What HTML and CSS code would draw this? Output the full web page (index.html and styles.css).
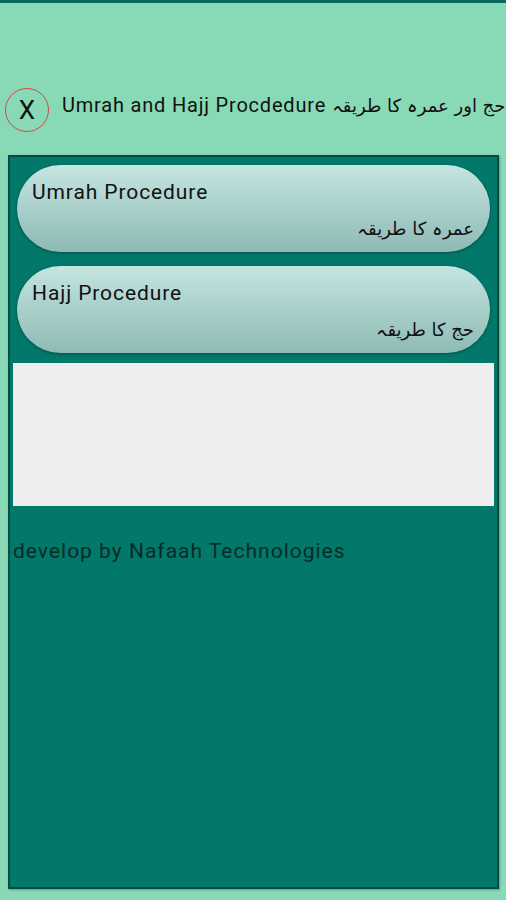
FILE: index.html
```html
<!DOCTYPE html>
<html lang="en">

<head>
    <meta charset="UTF-8">
    <meta name="viewport" content="width=device-width, initial-scale=1.0">
    <title>Umrah and Hajj</title>
    <link rel="stylesheet" href="styles.css">
</head>

<body>
    <div class="topbar"></div>

    <div class="header">
        <div class="close">X</div>
        <div class="title">Umrah and Hajj Procdedure <span class="ur" dir="rtl">حج اور عمرہ کا طریقہ</span></div>
    </div>

    <div class="panel">
        <div class="btn">
            <div class="en">Umrah Procedure</div>
            <div class="ur" dir="rtl">عمرہ کا طریقہ</div>
        </div>
        <div class="btn">
            <div class="en">Hajj Procedure</div>
            <div class="ur" dir="rtl">حج کا طریقہ</div>
        </div>
        <div class="blank"></div>
        <p class="credit">develop by Nafaah Technologies</p>
    </div>
</body>

</html>
```

FILE: styles.css
```css
body {
    margin: 0;
    background: #88d9b5;
    font-family: Roboto, "DejaVu Sans", sans-serif;
    color: #111;
}

.topbar {
    height: 3px;
    background: #0b6a5e;
}

.header {
    display: flex;
    align-items: center;
    gap: 13px;
    padding: 85px 0 0 5px;
    height: 44px;
}

.close {
    width: 42px;
    height: 42px;
    border: 1px solid #d9454b;
    border-radius: 50%;
    display: flex;
    align-items: center;
    justify-content: center;
    font-size: 26px;
    flex-shrink: 0;
}

.title {
    font-size: 20px;
    letter-spacing: 0.8px;
    white-space: nowrap;
    margin-bottom: 11px;
}

.title .ur {
    font-family: "DejaVu Sans", sans-serif;
    font-size: 18px;
    letter-spacing: 0;
}

.panel {
    margin: 23px 7px 13px 8px;
    height: 722px;
    background: #02786a;
    border: 2px solid #034d45;
    box-shadow: 1px 1px 2px rgba(0, 0, 0, 0.3);
    padding: 8px 3px 0 3px;
}

.btn {
    margin: 0 4px 14px 4px;
    height: 87px;
    border-radius: 44px;
    background: linear-gradient(#c5e5e1, #8ebab5);
    box-shadow: 0 1px 3px rgba(0, 0, 0, 0.35);
    padding: 0 16px 0 15px;
    box-sizing: border-box;
}

.btn .en {
    font-size: 21px;
    letter-spacing: 0.9px;
    padding-top: 14px;
    line-height: 26px;
}

.btn .ur {
    font-family: "DejaVu Sans", sans-serif;
    font-size: 18px;
    text-align: right;
    margin-top: 12px;
    line-height: 24px;
}

.blank {
    margin-top: -4px;
    height: 143px;
    background: #eeeeee;
}

.credit {
    margin: 33px 0 0 0;
    font-size: 21px;
    letter-spacing: 1px;
    color: #072b26;
}
```
